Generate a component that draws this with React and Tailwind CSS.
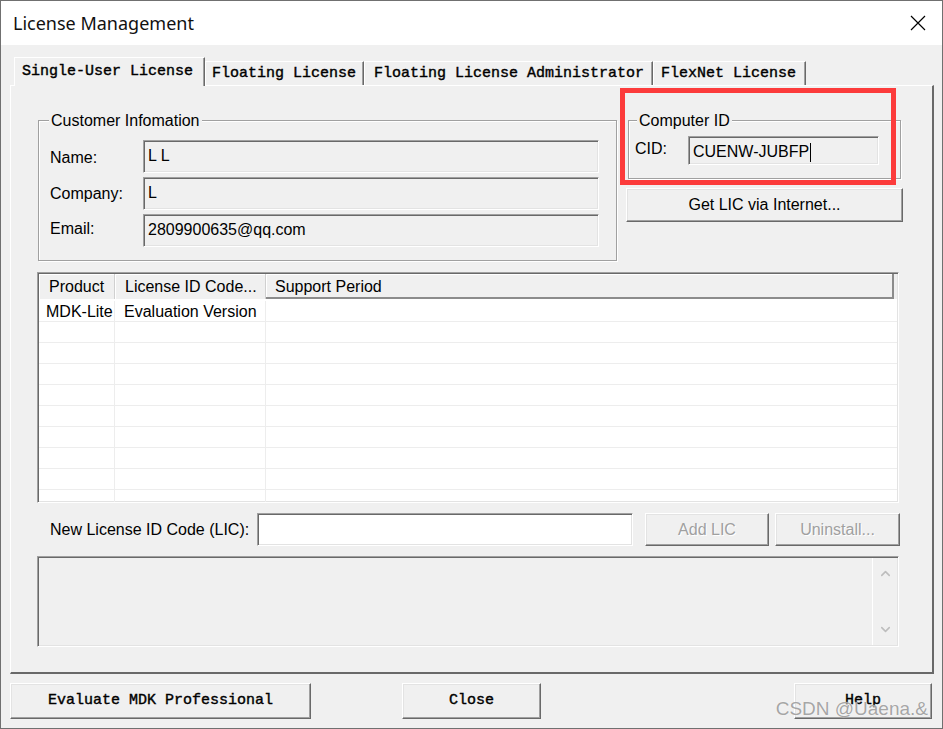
import React from 'react';
import { ChevronUp, ChevronDown } from 'lucide-react';

const sunken = 'border border-t-[#a0a0a0] border-l-[#a0a0a0] border-b-white border-r-white shadow-[inset_1px_1px_0_#696969,inset_-1px_-1px_0_#e3e3e3]';
const raised = 'border border-t-white border-l-white border-b-[#696969] border-r-[#696969] shadow-[inset_-1px_-1px_0_#a0a0a0,inset_1px_1px_0_#e3e3e3]';
const etched = 'border border-[#a0a0a0] shadow-[inset_1px_1px_0_#fff,1px_1px_0_#fff]';
const mono = "font-['Liberation_Mono',monospace] text-[15px] text-black [-webkit-text-stroke:0.4px_#000]";

const tabs = [
    { label: 'Single-User License', w: 'w-[191px]', pl: 'pl-[7px]' },
    { label: 'Floating License', w: 'w-[159px]', pl: 'pl-[6px]' },
    { label: 'Floating License Administrator', w: 'w-[289px]', pl: 'pl-[9px]' },
    { label: 'FlexNet License', w: 'w-[153px]', pl: 'pl-[7px]' },
];

const rows = [
    ['MDK-Lite', 'Evaluation Version', ''],
    ['', '', ''], ['', '', ''], ['', '', ''], ['', '', ''],
    ['', '', ''], ['', '', ''], ['', '', ''], ['', '', ''], ['', '', ''],
];

function Field({ value, caret }) {
    return (
        <div className={`${sunken} flex-1 h-full bg-[#f0f0f0] pl-[4px] pt-[5px] leading-[20px] flex items-start`}>
            <span>{value}</span>
            {caret && <span className="inline-block w-px h-[19px] bg-black ml-px mt-[1px]" />}
        </div>
    );
}

export default function App() {
    return (
        <div className="relative w-[943px] h-[729px] border border-[#707070] bg-[#f0f0f0] flex flex-col font-['Liberation_Sans',Arial,sans-serif] text-[16px] text-black overflow-hidden">
            {/* title bar */}
            <div className="h-[44px] bg-white flex items-center justify-between pl-[12px] pr-[16px]">
                <span className="font-['Noto_Sans',sans-serif] text-[18px] text-[#111]">License Management</span>
                <svg width="16" height="16" viewBox="0 0 16 16" className="text-black">
                    <path d="M1 1L15 15M15 1L1 15" stroke="currentColor" strokeWidth="1.2" fill="none" />
                </svg>
            </div>

            <div className="flex flex-col pl-[9px] pr-[8px]">
                {/* tabs */}
                <div className={`flex items-end h-[28px] mt-[12px] pl-[4px] leading-[18px] ${mono}`}>
                    {tabs.map((t, i) => (
                        <div
                            key={t.label}
                            className={`${t.w} ${t.pl} border-t border-l border-white border-r border-r-[#696969] shadow-[inset_-1px_0_0_#a0a0a0] whitespace-nowrap ${i === 0 ? 'relative z-10 -mb-px h-[29px] pt-[5px] bg-[#f0f0f0]' : 'h-[24px] pt-[3px]'}`}
                        >
                            {t.label}
                        </div>
                    ))}
                </div>

                {/* tab panel */}
                <div className="h-[589px] border-t border-l border-white border-r-2 border-b-2 border-r-[#696969] border-b-[#696969] pl-[26px] flex flex-col">
                    <div className="flex mt-[34px]">
                        <div className={`relative ${etched} ml-[1px] w-[579px] h-[141px] pt-[19px] pl-[11px] pr-[17px] flex flex-col gap-[4px]`}>
                            <span className="absolute -top-[10px] left-[10px] px-[2px] bg-[#f0f0f0] leading-[20px]">Customer Infomation</span>
                            {[['Name:', 'L L', 'mt-[3px]'], ['Company:', 'L', 'mt-[1px]'], ['Email:', '2809900635@qq.com', '-mt-[3px]']].map(([k, v, m]) => (
                                <div key={k} className="flex items-center h-[33px]">
                                    <span className={`w-[93px] ${m}`}>{k}</span>
                                    <Field value={v} />
                                </div>
                            ))}
                        </div>

                        <div className="relative ml-[9px] w-[277px]">
                            <div className={`relative ${etched} ml-[2px] w-[273px] h-[59px] pt-[15px] pl-[6px] flex items-start`}>
                                <span className="absolute -top-[10px] left-[8px] px-[2px] bg-[#f0f0f0] leading-[20px]">Computer ID</span>
                                <span className="w-[53px] mt-[3px] leading-[20px]">CID:</span>
                                <div className="w-[191px] h-[29px] flex">
                                    <Field value="CUENW-JUBFP" caret />
                                </div>
                            </div>
                            <button className={`${raised} mt-[9px] w-[277px] h-[34px] bg-[#f0f0f0] text-center`}>Get LIC via Internet...</button>
                            <div className="absolute -left-[6px] -top-[32px] w-[276px] h-[97px] border-[5px] border-[#fc3b3b]" />
                        </div>
                    </div>

                    {/* list view */}
                    <div className={`${sunken} mt-[11px] w-[862px] h-[231px] bg-white flex flex-col overflow-hidden p-px`}>
                        <div className="flex h-[25px] bg-[#f0f0f0] leading-[25px] shrink-0">
                            <div className="w-[76px] pl-[10px] border-r border-[#d0d0d0] shadow-[inset_1px_1px_0_#fff]">Product</div>
                            <div className="w-[151px] pl-[10px] border-r border-[#d0d0d0] shadow-[inset_1px_1px_0_#fff]">License ID Code...</div>
                            <div className="flex-1 mr-[3px] pl-[9px] border-r-2 border-b-2 border-[#8c8c8c] shadow-[inset_1px_1px_0_#fff]">Support Period</div>
                        </div>
                        <div className="pt-[2px]">
                            {rows.map((r, i) => (
                                <div key={i} className="flex h-[21px] border-b border-[#ededed] leading-[21px]">
                                    <div className="w-[76px] pl-[7px] border-r border-[#ededed]">{r[0]}</div>
                                    <div className="w-[151px] pl-[9px] border-r border-[#ededed]">{r[1]}</div>
                                    <div className="flex-1">{r[2]}</div>
                                </div>
                            ))}
                        </div>
                    </div>

                    {/* new LIC row */}
                    <div className="mt-[10px] flex items-center h-[33px]">
                        <span className="w-[220px] pl-[13px]">New License ID Code (LIC):</span>
                        <div className={`${sunken} w-[376px] h-[33px] bg-white`} />
                        <button className={`${raised} ml-[12px] w-[124px] h-[33px] bg-[#f0f0f0] text-[#a0a0a0] [text-shadow:1px_1px_0_#fff]`}>Add LIC</button>
                        <button className={`${raised} ml-[6px] w-[125px] h-[33px] bg-[#f0f0f0] text-[#a0a0a0] [text-shadow:1px_1px_0_#fff]`}>Uninstall...</button>
                    </div>

                    {/* message area */}
                    <div className={`${sunken} mt-[10px] w-[862px] h-[91px] flex justify-end p-px`}>
                        <div className="w-[25px] h-full border-l border-white flex flex-col items-center justify-between py-[8px] text-[#bdbdbd]">
                            <ChevronUp size={15} strokeWidth={2.5} />
                            <ChevronDown size={15} strokeWidth={2.5} />
                        </div>
                    </div>
                </div>

                {/* bottom buttons */}
                <div className={`mt-[9px] h-[36px] flex pr-[2px] ${mono}`}>
                    <button className={`${raised} w-[301px] h-full bg-[#f0f0f0]`}>Evaluate MDK Professional</button>
                    <button className={`${raised} ml-[91px] w-[139px] h-full bg-[#f0f0f0]`}>Close</button>
                    <button className={`${raised} ml-auto w-[138px] h-full bg-[#f0f0f0]`}>Help</button>
                </div>
            </div>

            <span className="absolute right-[14px] bottom-[5px] text-[19px] text-[#8e8e8e]/80 [text-shadow:0_0_1px_#fff] font-['Liberation_Sans',Arial,sans-serif]">CSDN @Uaena.&amp;</span>
        </div>
    );
}
